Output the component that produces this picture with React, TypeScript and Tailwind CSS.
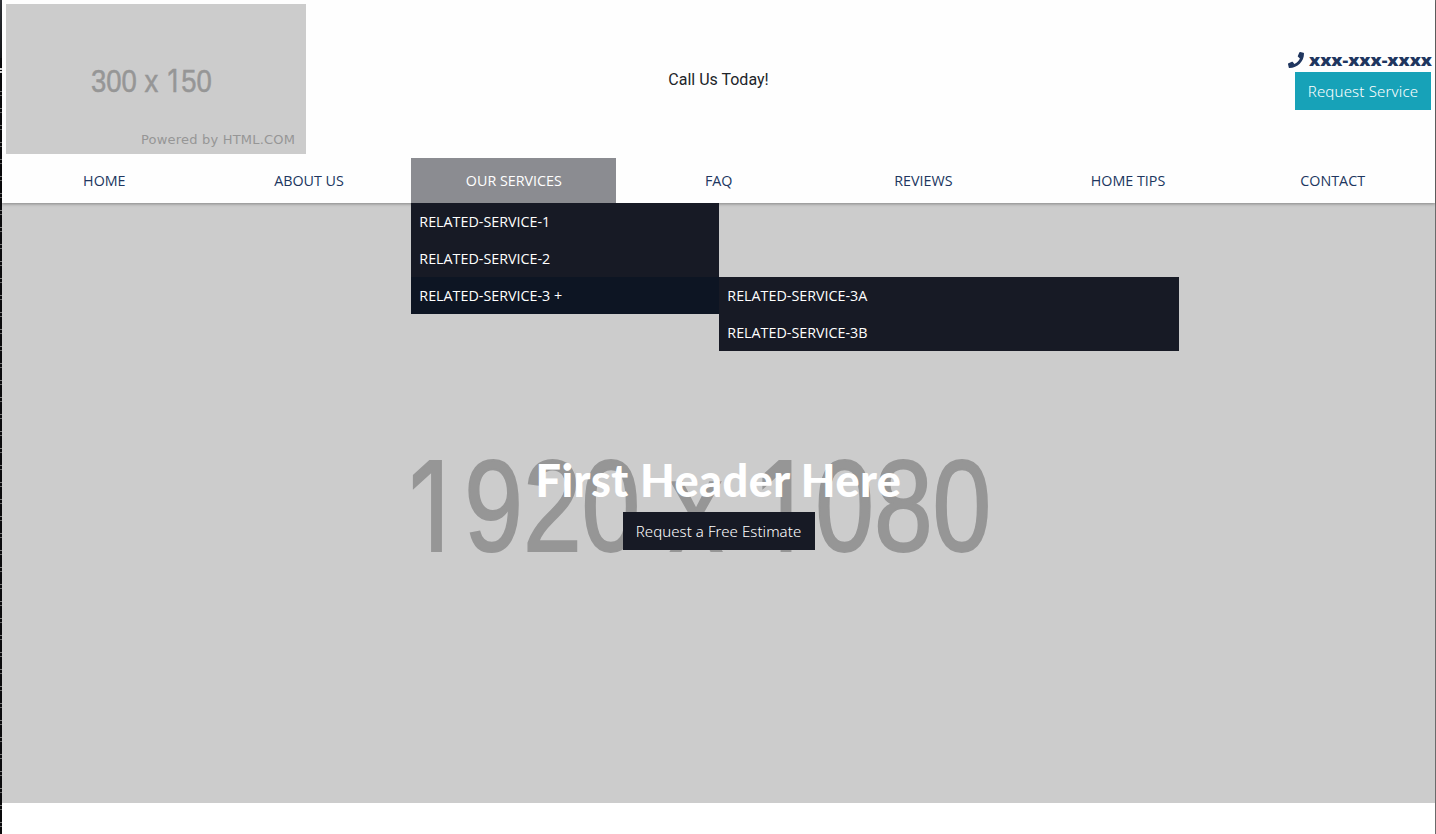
import { FaPhone } from "react-icons/fa";

const after = ["FAQ", "REVIEWS", "HOME TIPS", "CONTACT"];
const cell = "flex h-[45px] flex-1 items-center justify-center pt-[1px]";
const item = "flex h-[37px] items-center pl-2 pt-[1px]";

function LogoPlaceholder() {
  return (
    <svg width="300" height="150" className="block shrink-0 bg-[#ccc]">
      <text transform="translate(85 88) scale(0.86 1)" fontSize="32" fill="#969696" stroke="#969696" strokeWidth="0.5" className="font-['Liberation_Sans',sans-serif]">
        300 x <tspan x="89" className="font-['Inter',sans-serif]" fontSize="31">1</tspan><tspan x="104.9">50</tspan>
      </text>
      <text x="135" y="140" fontSize="13" textLength="154" lengthAdjust="spacing" fill="#969696" className="font-['DejaVu_Sans',sans-serif]">Powered by HTML.COM</text>
    </svg>
  );
}

function Services() {
  return (
    <div className="relative w-[205px] shrink-0">
      <a className={`${cell} bg-[#8b8c91] text-white`}>OUR SERVICES</a>
      <ul className="absolute left-0 top-[45px] z-10 w-[308px] bg-[#171a25] text-white">
        <li className={item}>RELATED-SERVICE-1</li>
        <li className={item}>RELATED-SERVICE-2</li>
        <li className={`${item} relative bg-[#0d1523]`}>
          RELATED-SERVICE-3 +
          <ul className="absolute left-full top-0 w-[460px] bg-[#171a25]">
            <li className={item}>RELATED-SERVICE-3A</li>
            <li className={item}>RELATED-SERVICE-3B</li>
          </ul>
        </li>
      </ul>
    </div>
  );
}

export default function App() {
  return (
    <div className="flex h-[834px] w-[1436px] overflow-hidden bg-white font-['Open_Sans',sans-serif]">
      <div className="flex w-[2px] shrink-0 flex-col bg-[#0a0a0c]">
        <div className="h-[58px] bg-linear-to-b from-[#33363c] to-[#15171a]" />
        <div className="mt-[10px] h-[5px] border-y-2 border-[#e8e8e8]" />
        <div className="mt-[18px] flex-1 bg-[repeating-linear-gradient(to_bottom,#777_0_1px,transparent_1px_4px,#666_4px_5px,transparent_5px_17px)]" />
      </div>
      <div className="flex w-[1434px] flex-col border-r border-[#6b6b6b]">
        <header className="relative z-10 h-[203px] shrink-0 bg-[#fefefe] shadow-[0_1px_3px_rgba(0,0,0,0.35)]">
          <div className="grid h-[158px] grid-cols-[1fr_auto_1fr] pl-1 pr-1 pt-1">
            <LogoPlaceholder />
            <p className="pt-[64px] font-['Roboto',sans-serif] text-base leading-6 text-[#212529]">Call Us Today!</p>
            <div className="flex flex-col items-end pt-[44px]">
              <div className="flex h-6 items-center text-[#20365f]">
                <FaPhone className="mr-[5px] size-4" />
                <svg width="123" height="24" className="-mr-px block overflow-visible">
                  <text x="0" y="18" fontSize="15" fontWeight="800" textLength="123" lengthAdjust="spacingAndGlyphs" fill="currentColor" className="font-['Open_Sans',sans-serif]">xxx-xxx-xxxx</text>
                </svg>
              </div>
              <a className="flex h-[38px] w-[136px] items-center justify-center whitespace-nowrap bg-[#17a2b8] font-['Noto_Sans',sans-serif] text-[15px] font-light tracking-[0.18px] text-white">Request Service</a>
            </div>
          </div>
          <nav className="flex text-[14.3px] leading-5 text-[#20365f]">
            <a className={cell}>HOME</a>
            <a className={cell}>ABOUT US</a>
            <Services />
            {after.map((label) => (
              <a key={label} className={cell}>{label}</a>
            ))}
          </nav>
        </header>
        <main className="relative h-[600px] shrink-0 bg-[#ccc]">
          <svg width="1433" height="600" className="absolute inset-0">
            <text transform="translate(402.6 347.6) scale(0.812 1)" fontSize="130" fill="#969696" stroke="#969696" strokeWidth="2" className="font-['Liberation_Sans',sans-serif]">
              <tspan x="5.5" fontSize="124" className="font-['Inter',sans-serif]">1</tspan>
              <tspan x="73.4">920 x</tspan>
              <tspan x="436" fontSize="124" className="font-['Inter',sans-serif]">1</tspan>
              <tspan x="505.7">080</tspan>
            </text>
          </svg>
          <div className="relative flex flex-col items-center pt-[249px] text-white">
            <h1 className="h-[60px] whitespace-nowrap font-['Lato',sans-serif] text-[45px] font-black leading-[56px] tracking-[0.45px]">First Header Here</h1>
            <a className="flex h-[38px] w-[192px] items-center justify-center whitespace-nowrap bg-[#171a25] font-['Noto_Sans',sans-serif] text-[15px] font-light tracking-[0.07px]">Request a Free Estimate</a>
          </div>
        </main>
      </div>
    </div>
  );
}
